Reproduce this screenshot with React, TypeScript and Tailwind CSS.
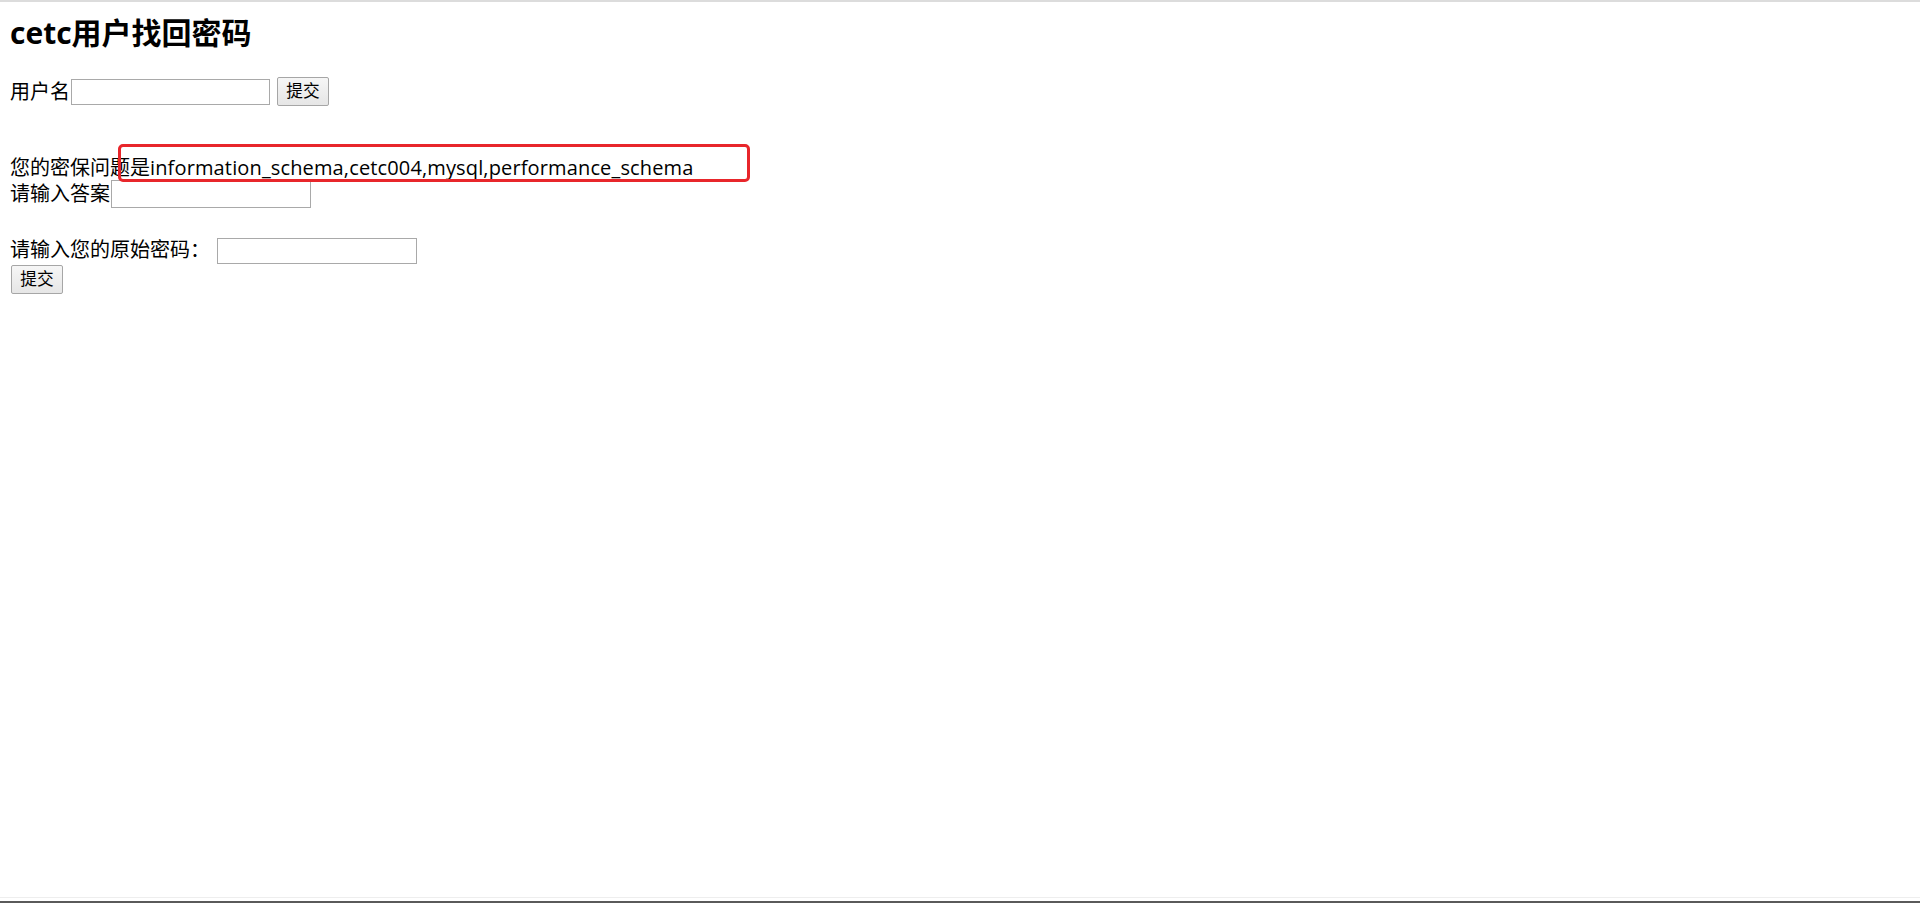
import React from "react";

const font = { fontFamily: '"Open Sans", "Noto Sans CJK SC", sans-serif' };

export default function App() {
  return (
    <div
      className="relative flex min-h-[903px] w-full flex-col border-t-2 border-[#dcdcdc] bg-white text-black"
      style={font}
    >
      <div className="flex flex-col pl-[10px] text-[20px]">
        <h2 className="mt-[11px] h-[40px] text-[30px] font-bold leading-[40px]">
          cetc用户找回密码
        </h2>

        <div className="mt-[24px] flex h-[29px] items-start">
          <span className="mt-[1px] whitespace-nowrap leading-[27px]">用户名</span>
          <input className="ml-[1px] mt-[2px] h-[26px] w-[199px] border border-[#a9a9a9] bg-white" />
          <button className="ml-[7px] h-[29px] w-[52px] rounded-[2px] border border-[#a6a6a6] bg-gradient-to-b from-[#f6f6f6] to-[#e6e6e6] text-[16.7px] leading-none">
            提交
          </button>
        </div>

        <div className="mt-[48px] h-[27px] whitespace-nowrap leading-[27px]">
          您的密保问题是<span className="tracking-[0.14px]">information_schema,cetc004,mysql,performance_schema</span>
        </div>

        <div className="-mt-[2px] flex h-[29px] items-start">
          <span className="mt-[1px] whitespace-nowrap leading-[27px]">请输入答案</span>
          <input className="ml-[1px] mt-[1px] h-[28px] w-[200px] border border-[#a9a9a9] bg-white" />
        </div>

        <div className="mt-[26px] flex h-[30px] items-start">
          <span className="mt-[2px] whitespace-nowrap leading-[28px]">请输入您的原始密码：</span>
          <input className="ml-[7px] mt-[4px] h-[26px] w-[200px] border border-[#a9a9a9] bg-white" />
        </div>

        <div className="flex">
          <button className="ml-[1px] mt-[1px] h-[29px] w-[52px] rounded-[2px] border border-[#a6a6a6] bg-gradient-to-b from-[#f6f6f6] to-[#e6e6e6] text-[16.7px] leading-none">
            提交
          </button>
        </div>
      </div>

      <div className="pointer-events-none absolute left-[118px] top-[142px] h-[38px] w-[632px] rounded-[5px] border-[3px] border-[#e8262b]" />

      <div className="mt-auto h-[1px] bg-[#eeeeee]" />
      <div className="mt-[3px] h-[2px] bg-[#5a5a5a]" />
    </div>
  );
}
